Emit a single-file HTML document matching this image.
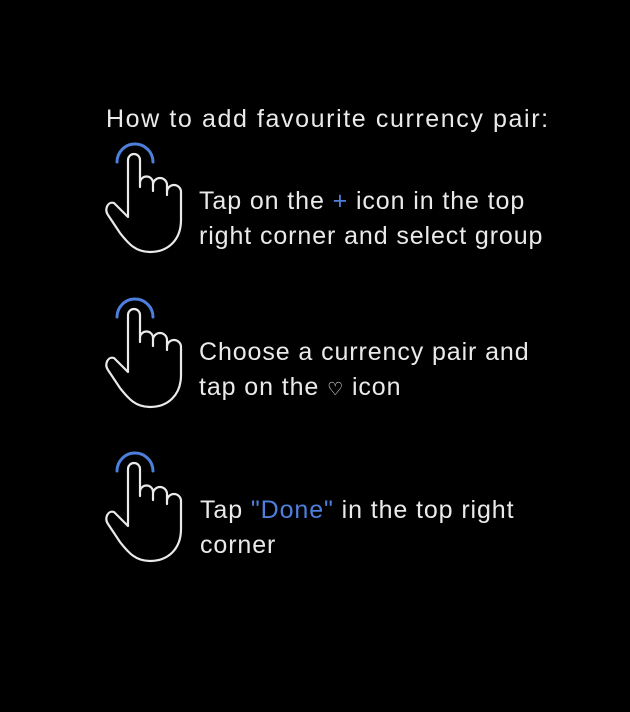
<!DOCTYPE html>
<html><head><meta charset="utf-8"><style>
body{margin:0;background:#000;width:630px;height:712px;overflow:hidden;position:relative;font-family:"Liberation Sans",sans-serif;color:#eaeaea}
.t{position:absolute;font-size:25px;line-height:35px;white-space:nowrap;letter-spacing:0.9px}
.b{color:#4d7fdc}
svg{position:absolute}
</style></head><body>
<div class="t" style="left:106px;top:102px;letter-spacing:1.6px">How to add favourite currency pair:</div>
<svg width="0" height="0"><defs><g id="h">
<path d="M17,27 A18,18 0 0 1 53,27" fill="none" stroke="#4d7fdc" stroke-width="3" stroke-linecap="round"/>
<path d="M28,80 L28,25 A6,6 0 0 1 40,25 L40,52 L40,48 A6.5,6.5 0 0 1 53,48 L53,56 L53,50 A7,7 0 0 1 67,50 L67,60 L67,57 A7,7 0 0 1 81,57 L81,85 C81,105 68,117 50,117 C35,117 28,108 20,98 L8,80 C4,74 8,66 14,68 L28,82 Z" fill="none" stroke="#eaeaea" stroke-width="2.2" stroke-linejoin="round"/>
</g></defs></svg>
<svg style="left:100px;top:135px" width="100" height="125"><use href="#h"/></svg>
<svg style="left:100px;top:290px" width="100" height="125"><use href="#h"/></svg>
<svg style="left:100px;top:444px" width="100" height="125"><use href="#h"/></svg>
<div class="t" style="left:199px;top:184px">Tap on the <span class="b">+</span> icon in the top<br>right corner and select group</div>
<div class="t" style="left:199px;top:335px">Choose a currency pair and<br>tap on the <span style="font-size:18px">♡</span> icon</div>
<div class="t" style="left:200px;top:493px">Tap <span class="b">"Done"</span> in the top right<br>corner</div>
</body></html>
